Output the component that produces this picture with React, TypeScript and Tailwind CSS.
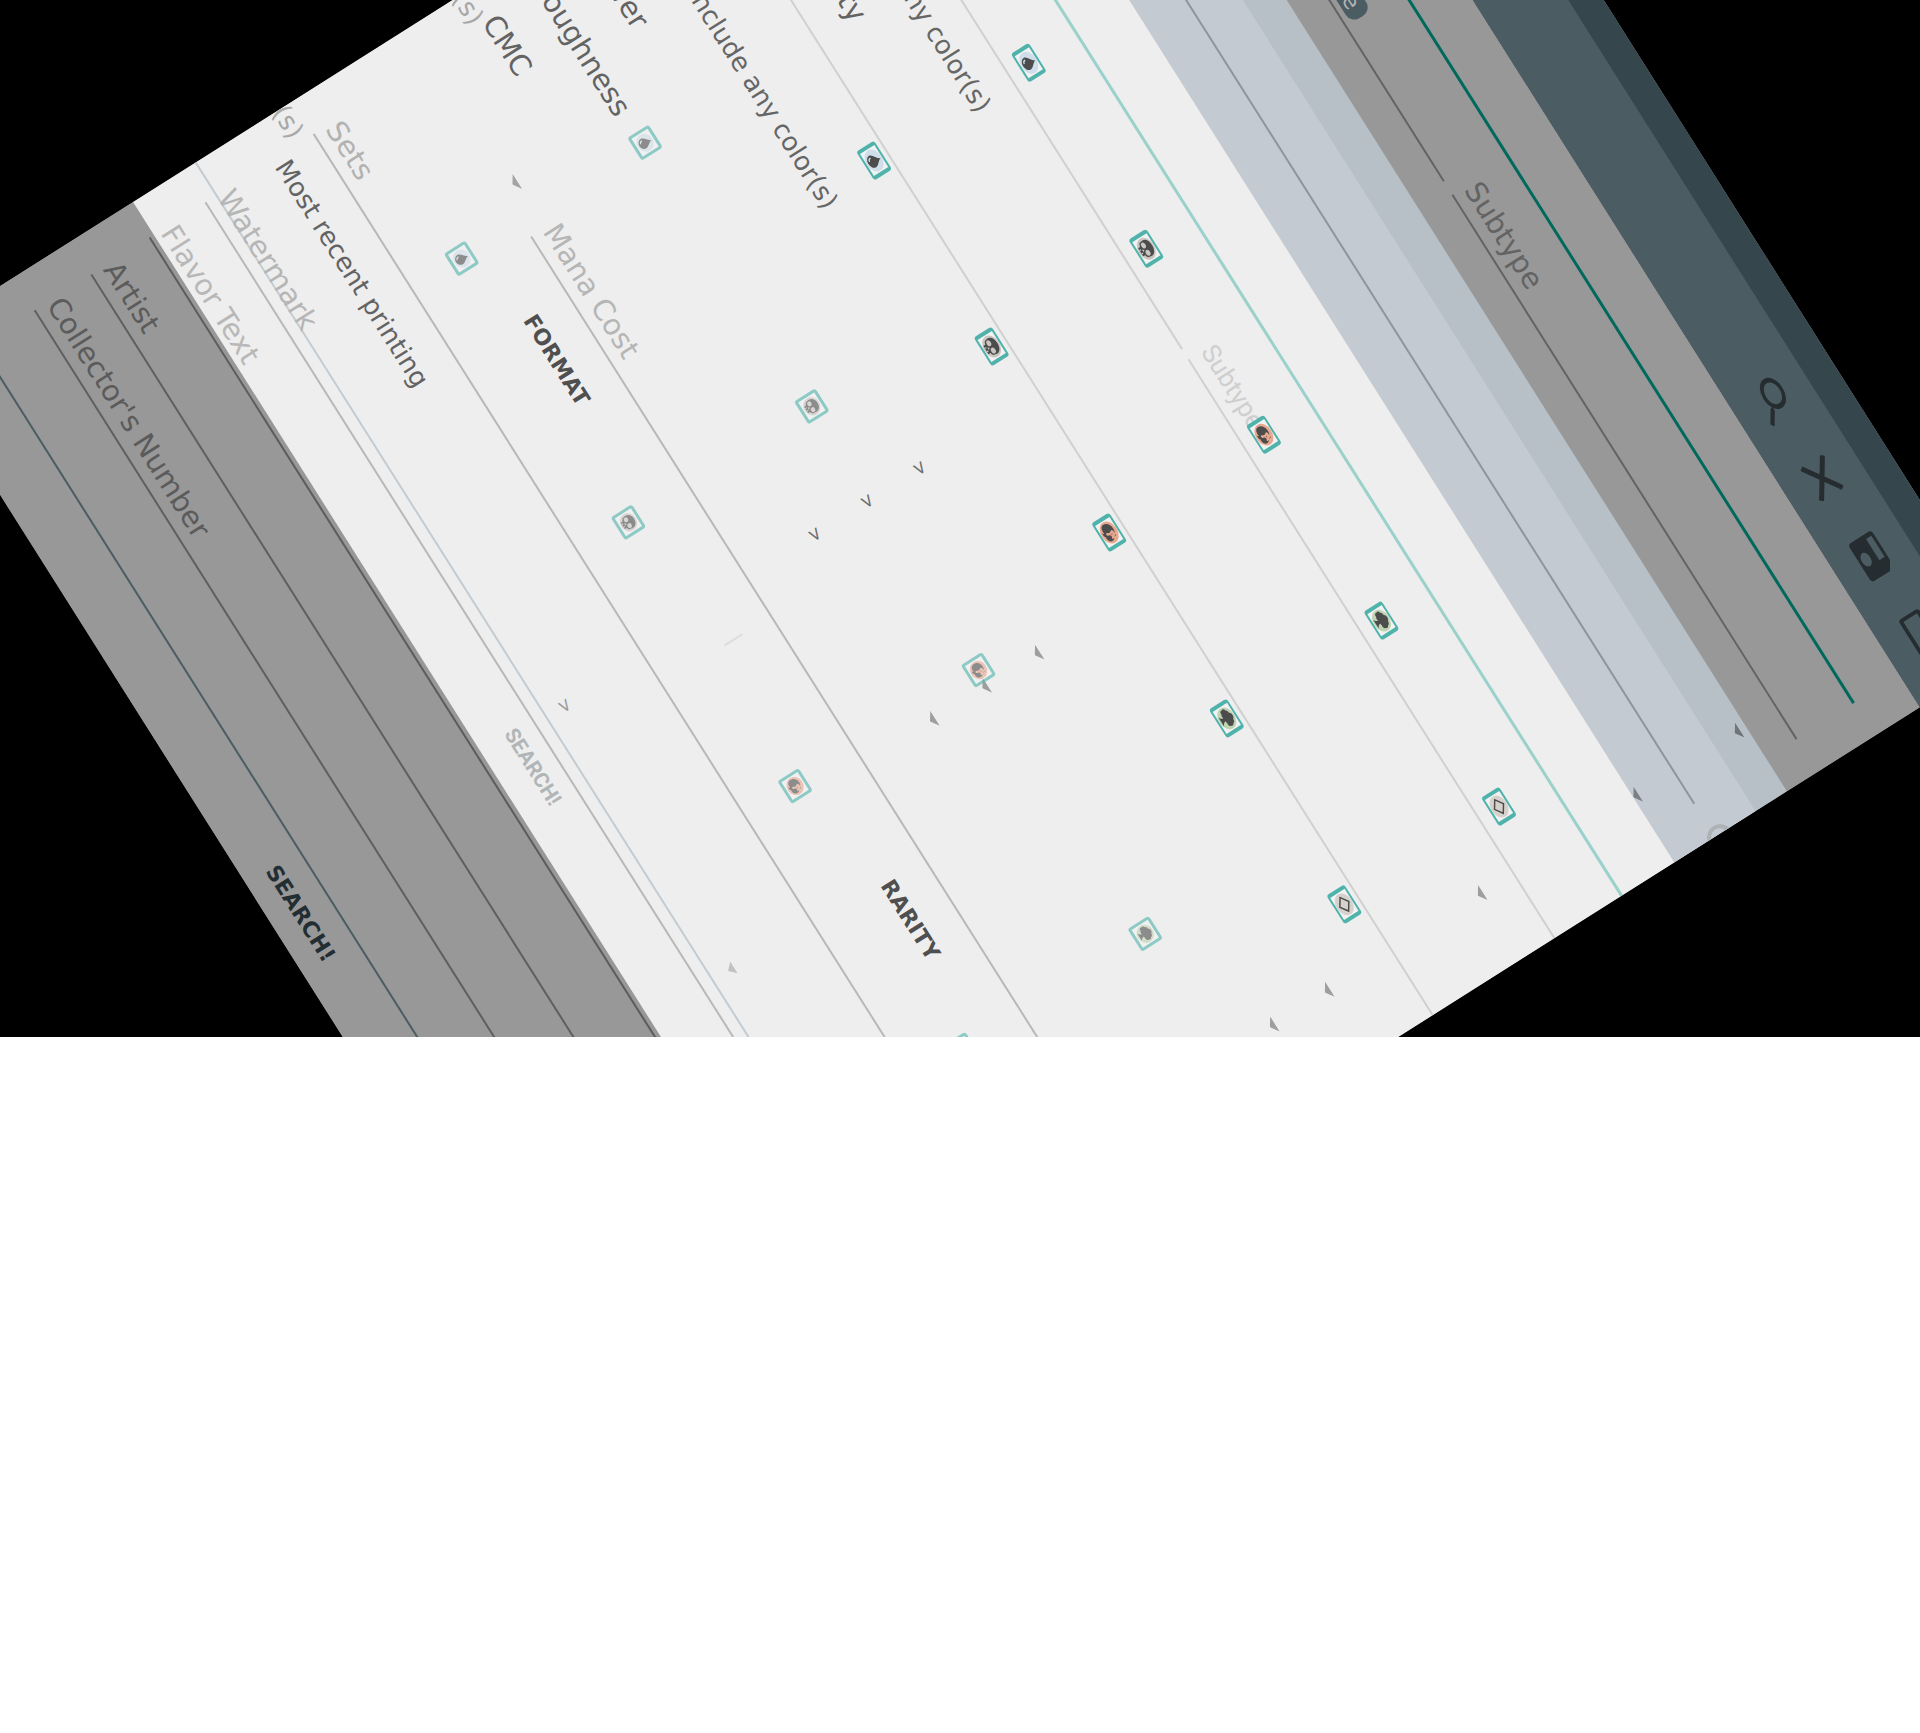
import React from "react";

type Mana = "white" | "blue" | "black" | "red" | "green" | "colorless";

const manaFill: Record<Mana, string> = {
  white: "#f3eed3",
  blue: "#cfdeea",
  black: "#cac5c1",
  red: "#e8a88f",
  green: "#bfd3b2",
  colorless: "#d6d1cc",
};

function ManaGlyph({ kind }: { kind: Mana }) {
  return (
    <svg viewBox="0 0 24 24" preserveAspectRatio="none" className="h-full w-full" aria-hidden="true">
      <circle cx="12" cy="12" r="11.8" fill={manaFill[kind]} />
      {kind === "white" && <circle cx="12" cy="12" r="5" fill="#4c4c4c" />}
      {kind === "blue" && (
        <>
          <path d="M13.500 2.500c.4 4.200 5.300 7.600 5.300 12.200a6.800 6.800 0 0 1-13.600 0c0-4.700 6.600-7.300 8.300-12.200z" fill="#4c4c4c" />
          <path d="M8 14.500a3.400 3.600 0 0 0 2.800 4" fill="none" stroke={manaFill.blue} strokeWidth="1.600" />
        </>
      )}
      {kind === "black" && (
        <>
          <path d="M12 2.500c5.600 0 9 3.600 9 8 0 2.200-.6 3.400-.6 4.800 0 1.800-2.600 2.400-3.600 3v3.200H7.200v-3.200c-1-.6-3.600-1.200-3.600-3 0-1.400-.6-2.600-.6-4.800 0-4.400 3.400-8 9-8z" fill="#4c4c4c" />
          <ellipse cx="7.700" cy="13" rx="3.200" ry="3.100" fill={manaFill.black} />
          <ellipse cx="16.300" cy="13" rx="3.200" ry="3.100" fill={manaFill.black} />
          <path d="M12 15.200l1.600 2.800h-3.200zM9.400 19.200h1.300v2.300H9.400zM13.300 19.200h1.300v2.300h-1.300z" fill={manaFill.black} />
        </>
      )}
      {kind === "red" && (
        <>
          <path
            d="M2.500 14.500C2 9 5 5 9.800 4.300c3-.4 4.700.6 5.600 1.900-2.200-.5-4 .1-4.200 1.700-.2 1.700 1.600 2.500 1.300 4.500-.2 1.500-1.500 2.300-1.200 3.700.3 1.300 2 1.300 2.700.2.700-1.200.1-2.400 1.300-3.600 1.200-1.100 2.900-.6 3.500.6.500-1 .9-1.900.7-3.300 1.800 2.600 2 5.600.4 7.800-1.300 1.900-3.600 2.500-5.600 2.100-1.500 1.300-3.400 1.900-5.700 1.300 1.300-.5 1.900-1.300 1.700-2.200C7 19.800 3 18.700 2.500 14.500z"
            fill="#4c4c4c"
          />
          <path d="M16.500 5.500c1.800.4 2.400 1.800 1.500 3.200-.1-1.300-.9-2-1.500-3.200zM14.200 9.200c1.200.1 1.800 1 1.400 2.200-.6-.6-1.200-1.200-1.400-2.200z" fill="#4c4c4c" />
        </>
      )}
      {kind === "green" && (
        <path d="M12 2.500c2 0 3.200.8 3.800 2.200 2.400-.2 3.800 1.200 3.700 3 1.900.8 2.400 3.200 1 4.800.2 2.200-2.400 3.600-4.300 2.600-.8.6-1.600.7-2.300.5.1 2.400 1.100 4.300 3.700 5.700H6.800c2.400-1.200 3.200-3.200 3.200-5.300-1.500.9-3 .6-3.900-.4-2.400.5-4.300-1.400-3.500-3.500-1.100-1.900.2-4 2-4.200.2-2 2-3 3.800-2.700C9 3.500 10.400 2.500 12 2.500z" fill="#4c4c4c" />
      )}
      {kind === "colorless" && (
        <path d="M12 4.500l8 7.500-8 7.500-8-7.500z" fill="none" stroke="#4c4c4c" strokeWidth="1.800" />
      )}
    </svg>
  );
}

const solidMana: Mana[] = ["white", "blue", "black", "red", "green", "colorless"];
const fadedMana: Mana[] = ["blue", "black", "red", "green"];

function SolidManaRow({ className, label }: { className: string; label: string }) {
  return (
    <div className={`flex ${className}`} role="group" aria-label={label}>
      {solidMana.map((kind) => (
        <div key={kind} className="flex w-[220px] justify-center">
          <button
            aria-label={kind}
            className="h-[21px] w-[34px] rounded-[3px] border-x-4 border-y-2 border-[#4fb3ab] bg-[#f2f2f2] px-px"
          >
            <ManaGlyph kind={kind} />
          </button>
        </div>
      ))}
    </div>
  );
}

function FadedManaRow({ className, label }: { className: string; label: string }) {
  return (
    <div className={`flex ${className}`} role="group" aria-label={label}>
      {fadedMana.map((kind) => (
        <div key={kind} className="flex w-[312px] justify-center">
          <button
            aria-label={kind}
            className="h-[25px] w-[27px] rounded-[3px] border-[3px] border-[#4fb3ab] bg-[#f2f2f2] p-px opacity-60"
          >
            <ManaGlyph kind={kind} />
          </button>
        </div>
      ))}
    </div>
  );
}

function Caret({ className }: { className: string }) {
  return (
    <svg viewBox="0 0 18 6" preserveAspectRatio="none" className={className} aria-hidden="true">
      <path d="M0 0h18l-9 6z" fill="currentColor" />
    </svg>
  );
}

function Field({ label, className }: { label: string; className: string }) {
  return (
    <input
      aria-label={label}
      placeholder={label}
      className={`block border-b-2 bg-transparent pl-[2px] text-[29px] outline-none ${className}`}
    />
  );
}

const stats = ["Power", "Toughness", "CMC"];

function Toolbar() {
  return (
    <div className="flex h-[81px] items-center justify-end text-[#262d30]">
      <button aria-label="Search" className="flex w-[92px] justify-center">
        <svg viewBox="3 3 17.500 17.500" preserveAspectRatio="none" className="h-[30px] w-[46px]">
          <path
            fill="currentColor"
            d="M15.500 14h-.79l-.28-.27A6.471 6.471 0 0 0 16 9.500 6.500 6.500 0 1 0 9.500 16c1.610 0 3.090-.59 4.230-1.570l.27.28v.79l5 4.990L20.490 19l-4.990-5zm-6 0C7.010 14 5 11.990 5 9.500S7.010 5 9.500 5 14 7.010 14 9.500 11.990 14 9.500 14z"
          />
        </svg>
      </button>
      <button aria-label="Clear" className="flex w-[92px] justify-center">
        <svg viewBox="0 0 42 28" className="h-7 w-[42px]">
          <path d="M2 1.500L40 26.500M40 1.500L2 26.500" stroke="currentColor" strokeWidth="5" />
        </svg>
      </button>
      <button aria-label="Save" className="flex w-[92px] justify-center">
        <svg viewBox="3 3 18 18" preserveAspectRatio="none" className="h-7 w-[45px]">
          <path
            fill="currentColor"
            d="M17 3H5a2 2 0 0 0-2 2v14a2 2 0 0 0 2 2h14c1.100 0 2-.9 2-2V7l-4-4zm-5 16c-1.660 0-3-1.340-3-3s1.340-3 3-3 3 1.340 3 3-1.340 3-3 3zm3-10H5V5h10v4z"
          />
        </svg>
      </button>
      <button aria-label="Load" className="mr-[16px] flex w-[92px] justify-center">
        <svg viewBox="0 0 46 24" className="h-6 w-[46px]">
          <rect x="2" y="2" width="42" height="20" rx="2" fill="none" stroke="currentColor" strokeWidth="4" />
        </svg>
      </button>
    </div>
  );
}

function TypeSection() {
  return (
    <div className="h-[157px] bg-[#989898] px-[39px] pt-[52px]">
      <div className="h-[3px] bg-[#00695c]" />
      <div className="flex h-[67px] items-end gap-4">
        <div className="flex h-full w-[644px] items-end border-b-2 border-[#636363] pb-[5px]">
          <div className="flex w-[461px] justify-end">
            <span className="flex h-6 items-center rounded-[10px] bg-[#4b5c63] px-3 text-[22px] text-[#b4b4b4]">
              Creature
            </span>
          </div>
        </div>
        <Field label="Subtype" className="h-[42px] min-w-0 flex-1 border-[#636363] placeholder:text-[#636363]" />
      </div>
    </div>
  );
}

function SelectionBand() {
  return (
    <div className="bg-[#b7c0c6]">
      <div className="flex h-[37px] justify-end pt-[7px] pr-[68px]">
        <Caret className="h-[6px] w-[18px] text-[#6d757b]" />
      </div>
      <div className="relative h-[96px] bg-[#c3cad2] pt-[47px]">
        <div className="mx-[39px] h-[2px] bg-[#8e959d]" />
        <div className="absolute top-[31px] -right-[16px] h-[26px] w-[26px] rounded-full border-4 border-[#adb2b4]" />
        <Caret className="absolute right-[68px] bottom-0 h-[6px] w-[18px] text-[#7a8087]" />
      </div>
    </div>
  );
}

function CriteriaLayer() {
  return (
    <div className="col-start-1 row-start-1 flex flex-col pt-[61px]">
      <div className="h-[3px] shrink-0 bg-[#9ad1cb]" />
      <div className="flex h-[79px] shrink-0 items-end gap-3">
        <div className="h-full w-[685px] border-b-2 border-[#d0d0d0]" />
        <input
          aria-label="Card subtype"
          placeholder="Subtype"
          className="block h-[46px] min-w-0 flex-1 border-b-2 border-[#d0d0d0] bg-transparent font-[Roboto] text-[26px] outline-none placeholder:text-[#cfcfcf]"
        />
      </div>
      <div className="flex h-[76px] shrink-0 items-center justify-between pr-[68px] text-[#666666]">
        <span className="w-[377px] text-right text-[26px]">Any color(s)</span>
        <Caret className="h-[6px] w-[18px] text-[#9e9e9e]" />
      </div>
      <div className="flex h-[40px] shrink-0 items-center pl-[38px] text-[29px] text-[#636363]">Color identity</div>
      <div className="mt-[26px] h-[2px] shrink-0 bg-[#d0d0d0]" />
      <div className="mt-[48px] flex h-[54px] shrink-0 items-center justify-between pr-[68px] text-[#666666]">
        <span className="w-[377px] text-right text-[26px]">Include any color(s)</span>
        <Caret className="h-[6px] w-[18px] text-[#9e9e9e]" />
      </div>
      <div className="mt-[7px] flex shrink-0 flex-col">
        {stats.map((stat, i) => (
          <div key={stat} className="flex h-[62px] items-center">
            <span className="w-[600px] pl-[35px] text-[29px] text-[#636363]">{stat}</span>
            <button
              aria-label={`${stat} comparison`}
              className="ml-[38px] flex w-[236px] items-center justify-between text-lg text-[#6f6f6f]"
            >
              <span>&gt;</span>
              <Caret className="h-[6px] w-[18px] text-[#9e9e9e]" />
            </button>
            {i === 0 && <Caret className="mr-[68px] ml-auto h-[6px] w-[18px] text-[#9e9e9e]" />}
          </div>
        ))}
      </div>
      <div className="flex h-[51px] shrink-0 items-end pr-[39px] pl-[179px]">
        <Caret className="mb-[13px] h-[6px] w-[18px] text-[#a3a3a3]" />
        <Field
          label="Mana Cost"
          className="ml-[45px] h-[43px] min-w-0 flex-1 border-[#b8b8b8] placeholder:text-[#b6b6b6]"
        />
      </div>
      <div className="mx-[30px] flex h-[86px] shrink-0 items-center text-[22px] font-bold text-[#4f4f4f]">
        <h2 className="flex-1 text-center">FORMAT</h2>
        <div className="h-[21px] w-[2px] bg-[#dcdcdc]" />
        <h2 className="flex-1 text-center">RARITY</h2>
      </div>
      <Field label="Sets" className="mx-[39px] h-[43px] shrink-0 border-[#b8b8b8] placeholder:text-[#b2b2b2]" />
      <div className="flex h-[82px] shrink-0 items-center pl-[46px] text-[26px] text-[#636363]">
        Most recent printing
      </div>
      <div className="flex h-[20px] shrink-0 items-center pl-[649px] text-lg text-[#9b9b9b]">
        <span className="w-[312px]">&gt;</span>
        <Caret className="h-[7px] w-[14px] text-[#c2c2c2]" />
      </div>
      <div className="mt-[11px] h-[2px] shrink-0 bg-[#c2ccd2]" />
      <Field
        label="Watermark"
        className="mx-[39px] -mt-[30px] h-[43px] shrink-0 border-[#b8b8b8] placeholder:text-[#b6b6b6]"
      />
      <div className="grid h-[60px] shrink-0 grid-cols-3 px-[39px]">
        <label htmlFor="flavor" className="self-end pl-[2px] text-[29px] leading-8 text-[#b8b8b8]">
          Flavor Text
        </label>
        <button className="mt-2 self-start text-center font-[Roboto] text-[21px] leading-8 font-bold text-[#b0b6b8]">
          SEARCH!
        </button>
      </div>
    </div>
  );
}

function ManaLayer() {
  return (
    <div className="pointer-events-none col-start-1 row-start-1 flex flex-col">
      <SolidManaRow className="mt-[108px] pl-[31px]" label="Colors" />
      <SolidManaRow className="mt-[162px] pl-[31px]" label="Color identity" />
      <FadedManaRow className="mt-[161px] pl-[67px]" label="Mana symbols" />
      <FadedManaRow className="mt-[192px] pl-[67px]" label="Produced mana" />
    </div>
  );
}

export default function App() {
  return (
    <div className="min-h-screen bg-white font-['DejaVu_Sans',Roboto,sans-serif]">
      <main className="relative h-[1037px] overflow-hidden bg-black">
        <div className="absolute -top-[520px] left-[1275px] w-[1382px] origin-top-left rotate-[57.7deg] overflow-hidden bg-[#989898]">
          <header className="bg-[#4b5c63]">
            <div className="h-[30px] bg-[#36464d]" />
            <Toolbar />
          </header>
          <TypeSection />
          <SelectionBand />
          <div className="relative grid h-[950px] bg-[#eeeeee]">
            <CriteriaLayer />
            <ManaLayer />
            <span className="absolute top-[544px] right-[1350px] text-[26px] text-[#a8a8a8]">Color(s)</span>
            <span className="absolute top-[757px] right-[1350px] text-[26px] text-[#a8a8a8]">Color(s)</span>
          </div>
          <div className="flex flex-col bg-[#989898] pt-1">
            <input id="flavor" className="mx-[39px] h-[2px] bg-[#5c5c5c]" />
            <Field label="Artist" className="mx-[39px] mt-[26px] h-[43px] border-[#5f5f5f] placeholder:text-[#5b5b5b]" />
            <Field
              label="Collector's Number"
              className="mx-[39px] mt-[24px] h-[43px] border-[#5f5f5f] placeholder:text-[#5b5b5b]"
            />
            <div className="mt-[63px] h-[2px] bg-[#4b5c63]" />
            <button className="h-[62px] text-center text-[22px] font-bold text-[#232e33]">SEARCH!</button>
          </div>
        </div>
      </main>
    </div>
  );
}
